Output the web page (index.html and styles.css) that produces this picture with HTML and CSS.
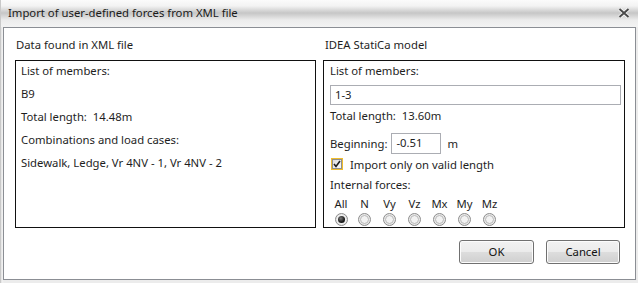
FILE: index.html
```html
<!DOCTYPE html>
<html lang="en">
  <head>
    <meta charset="UTF-8" />
    <title>Import of user-defined forces from XML file</title>
    <link rel="stylesheet" href="styles.css">
  </head>
  <body>
    <div class="window">
      <div class="titleBar">
        <span class="titleText">Import of user-defined forces from XML file</span>
        <svg class="closeBtn" width="12" height="10" viewBox="0 0 12 10">
          <path d="M1.5 1 L10.5 9 M10.5 1 L1.5 9" stroke="#ffffff" stroke-width="3.4" />
          <path d="M1.5 1 L10.5 9 M10.5 1 L1.5 9" stroke="#4a4a4a" stroke-width="2" />
        </svg>
      </div>
      <div class="panel">
        <div class="columns">
          <div class="group">
            <div class="groupTitle">Data found in XML file</div>
            <div class="box xmlBox">
              <div class="line">List of members:</div>
              <div class="line">B9</div>
              <div class="line">Total length:&nbsp; 14.48m</div>
              <div class="line">Combinations and load cases:</div>
              <div class="line">Sidewalk, Ledge, Vr 4NV - 1, Vr 4NV - 2</div>
            </div>
          </div>
          <div class="group">
            <div class="groupTitle right">IDEA StatiCa model</div>
            <div class="box modelBox">
              <div class="line">List of members:</div>
              <div class="textInput wide">1-3</div>
              <div class="line">Total length:&nbsp; 13.60m</div>
              <div class="beginRow">
                <span>Beginning:</span>
                <div class="textInput short">-0.51</div>
                <span>m</span>
              </div>
              <div class="checkRow">
                <span class="checkFocus">
                  <span class="checkBox">
                    <svg width="8" height="8" viewBox="0 0 8 8">
                      <path d="M1 4 L3 6.5 L7 1" stroke="#1d1d1d" stroke-width="1.6" fill="none" />
                    </svg>
                  </span>
                </span>
                <span>Import only on valid length</span>
              </div>
              <div class="line forcesTitle">Internal forces:</div>
              <div class="radios">
                <div class="radioItem"><span>All</span><span class="radio checked"></span></div>
                <div class="radioItem"><span>N</span><span class="radio"></span></div>
                <div class="radioItem"><span>Vy</span><span class="radio"></span></div>
                <div class="radioItem"><span>Vz</span><span class="radio"></span></div>
                <div class="radioItem"><span>Mx</span><span class="radio"></span></div>
                <div class="radioItem"><span>My</span><span class="radio"></span></div>
                <div class="radioItem"><span>Mz</span><span class="radio"></span></div>
              </div>
            </div>
          </div>
        </div>
        <div class="buttons">
          <div class="Btn ok">OK</div>
          <div class="Btn cancel">Cancel</div>
        </div>
      </div>
    </div>
  </body>
</html>
```

FILE: styles.css
```css
* {
  padding: 0;
  margin: 0;
  box-sizing: border-box;
}
body {
  background-color: #e9e9e9;
  font-family: "Noto Sans", "Open Sans", sans-serif;
  font-size: 11.3px;
  color: #1e1e1e;
}
.window {
  width: 638px;
  height: 283px;
  background: linear-gradient(to right, #dcdcdc 0, #f2f2f2 1px, #ececec 3px);
  border-left: 1px solid #c9c9c9;
  display: flex;
  flex-direction: column;
}
.titleBar {
  height: 27px;
  display: flex;
  align-items: center;
  justify-content: space-between;
  padding: 0 7px 1px 7px;
  background: linear-gradient(
    to bottom,
    #fbfbfb 0,
    #f3f3f3 6px,
    #d9d9d9 10px,
    #c6c6c6 13px,
    #d6d6d6 16px,
    #ececec 20px,
    #f3f3f3 27px
  );
}
.titleText {
  color: #1a1a1a;
  margin-top: -1px;
}
.closeBtn {
  margin-right: 1px;
  margin-top: -1px;
}
.panel {
  height: 253px;
  margin: 0 2px 0 2px;
  background-color: white;
  border: 1px solid #8b8e94;
  display: flex;
  flex-direction: column;
  padding: 9px 10px 0 11px;
}
.columns {
  display: grid;
  grid-template-columns: 301px 302px;
  column-gap: 7px;
}
.groupTitle {
  line-height: 16px;
  height: 16px;
  margin-bottom: 7px;
  padding-left: 1px;
}
.groupTitle.right {
  padding-left: 2px;
}
.box {
  height: 168px;
  border: 1px solid #111;
}
.xmlBox {
  padding: 0 5px;
}
.xmlBox .line {
  line-height: 23px;
}
.xmlBox .line:first-child {
  margin-top: -2px;
}
.modelBox {
  padding: 0 3px 0 6px;
}
.modelBox .line {
  line-height: 20px;
}
.modelBox .line:first-child {
  margin-top: 0;
  line-height: 19px;
}
.textInput {
  border: 1px solid #abadb3;
  height: 20px;
  line-height: 18px;
  padding-left: 4px;
}
.textInput.wide {
  margin-top: 5px;
  margin-bottom: 1px;
}
.textInput.short {
  width: 50px;
  height: 21px;
  margin: 0 6px 0 4px;
}
.beginRow {
  display: flex;
  align-items: center;
  margin-top: 7px;
}
.checkRow {
  display: flex;
  align-items: center;
  margin-top: 3px;
  height: 14px;
}
.checkFocus {
  width: 12px;
  height: 12px;
  border: 1px solid #f0bd2d;
  display: flex;
  align-items: center;
  justify-content: center;
  margin: 0 7px 0 1px;
}
.checkBox {
  width: 10px;
  height: 10px;
  border: 1px solid #8e8f8f;
  background: linear-gradient(135deg, #dcdcdc, #fbfbfb);
  display: flex;
  align-items: center;
  justify-content: center;
}
.forcesTitle {
  margin-top: 4px;
}
.radios {
  display: grid;
  grid-template-columns: 22px repeat(6, 25px);
  margin-top: 1px;
}
.radioItem {
  display: flex;
  flex-direction: column;
  align-items: center;
  line-height: 16px;
}
.radio {
  width: 13px;
  height: 13px;
  margin-top: 1px;
  border-radius: 50%;
  border: 1px solid #8d8d8d;
  background: radial-gradient(circle at 50% 50%, #ffffff 0, #ececec 60%, #d5d5d5 100%);
  display: flex;
  align-items: center;
  justify-content: center;
}
.radio::after {
  content: "";
  width: 7px;
  height: 7px;
  border-radius: 50%;
  border: 1px solid #b9b9b9;
  background-color: #f2f2f2;
}
.radio.checked::after {
  border: none;
  width: 7px;
  height: 7px;
  background: radial-gradient(circle at 40% 35%, #7a7a7a 0, #1a1a1a 60%, #000 100%);
}
.buttons {
  display: flex;
  justify-content: flex-end;
  gap: 12px;
  margin-top: 12px;
  padding-right: 5px;
}
.Btn {
  width: 75px;
  height: 24px;
  border: 1px solid #707070;
  border-radius: 3px;
  box-shadow: inset 0 0 0 1px #fcfcfc;
  background: linear-gradient(to bottom, #f2f2f2 0, #ebebeb 50%, #dddddd 51%, #cfcfcf 100%);
  text-align: center;
  line-height: 21px;
  color: #111;
}
.Btn.cancel {
  width: 74px;
}
```
